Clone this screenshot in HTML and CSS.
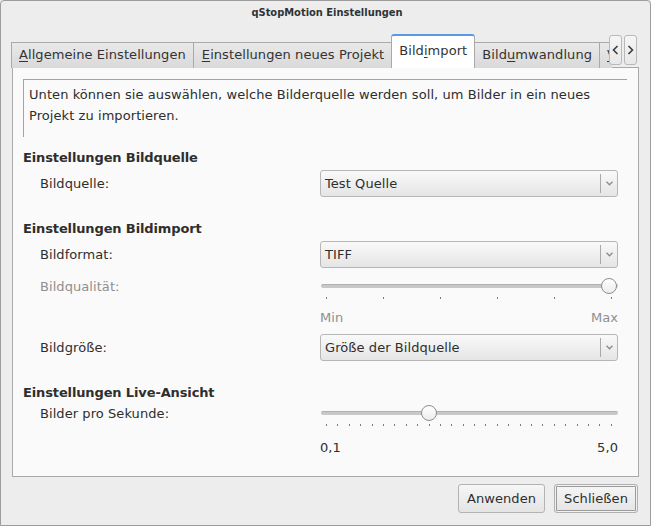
FILE: index.html
```html
<!DOCTYPE html>
<html lang="de">
<head>
<meta charset="utf-8">
<title>qStopMotion Einstellungen</title>
<link rel="stylesheet" href="styles.css">
</head>
<body>
<div class="window">
  <div class="titlebar">qStopMotion Einstellungen</div>
  <div class="tabbar">
    <div class="tabs">
      <div class="tab"><u>A</u>llgemeine Einstellungen</div>
      <div class="tab tab-wide"><u>E</u>instellungen neues Projekt</div>
      <div class="tab active">Bild<u>i</u>mport</div>
      <div class="tab">Bild<u>u</u>mwandlung</div>
      <div class="tab"><u>V</u>ideoexport</div>
    </div>
    <div class="scrollbtns">
      <div class="sbtn"><svg width="7" height="10" viewBox="0 0 7 10"><path d="M5.5 1 L1.5 5 L5.5 9" fill="none" stroke="#3c3c3c" stroke-width="1.6"/></svg></div>
      <div class="sbtn"><svg width="7" height="10" viewBox="0 0 7 10"><path d="M1.5 1 L5.5 5 L1.5 9" fill="none" stroke="#3c3c3c" stroke-width="1.6"/></svg></div>
    </div>
  </div>
  <div class="panel">
    <div class="desc">Unten können sie auswählen, welche Bilderquelle werden soll, um Bilder in ein neues Projekt zu importieren.</div>

    <div class="heading h-first">Einstellungen Bildquelle</div>
    <div class="row combo-row">
      <div class="label">Bildquelle:</div>
      <div class="combo"><span class="ctext">Test Quelle</span><span class="carrow"><svg width="7" height="5" viewBox="0 0 7 5"><path d="M0.5 0.8 L3.5 3.8 L6.5 0.8" fill="none" stroke="#8a8a8a" stroke-width="1.3"/></svg></span></div>
    </div>

    <div class="heading h-next">Einstellungen Bildimport</div>
    <div class="row combo-row">
      <div class="label">Bildformat:</div>
      <div class="combo"><span class="ctext">TIFF</span><span class="carrow"><svg width="7" height="5" viewBox="0 0 7 5"><path d="M0.5 0.8 L3.5 3.8 L6.5 0.8" fill="none" stroke="#8a8a8a" stroke-width="1.3"/></svg></span></div>
    </div>
    <div class="row slider-row s-quality">
      <div class="label disabled">Bildqualität:</div>
      <div class="slider">
        <div class="groove"></div>
        <div class="handle" style="left: 281px"></div>
      </div>
    </div>
    <div class="row ticks-row">
      <div class="label"></div>
      <div class="ticks">
        <i></i><i></i><i></i><i></i><i></i><i></i>
      </div>
    </div>
    <div class="row ends-row e-quality">
      <div class="label"></div>
      <div class="ends disabled"><span>Min</span><span>Max</span></div>
    </div>
    <div class="row combo-row c-size">
      <div class="label">Bildgröße:</div>
      <div class="combo"><span class="ctext">Größe der Bildquelle</span><span class="carrow"><svg width="7" height="5" viewBox="0 0 7 5"><path d="M0.5 0.8 L3.5 3.8 L6.5 0.8" fill="none" stroke="#8a8a8a" stroke-width="1.3"/></svg></span></div>
    </div>

    <div class="heading h-live">Einstellungen Live-Ansicht</div>
    <div class="row slider-row s-live">
      <div class="label">Bilder pro Sekunde:</div>
      <div class="slider">
        <div class="groove"></div>
        <div class="handle" style="left: 101px"></div>
      </div>
    </div>
    <div class="row ticks-row">
      <div class="label"></div>
      <div class="ticks">
        <i></i><i></i><i></i><i></i><i></i><i></i><i></i><i></i><i></i><i></i><i></i><i></i><i></i>
        <i></i><i></i><i></i><i></i><i></i><i></i><i></i><i></i><i></i><i></i><i></i><i></i><i></i>
      </div>
    </div>
    <div class="row ends-row e-live">
      <div class="label"></div>
      <div class="ends"><span>0,1</span><span>5,0</span></div>
    </div>
  </div>
  <div class="buttons">
    <div class="btn">Anwenden</div>
    <div class="btn default">Schließen</div>
  </div>
</div>
</body>
</html>
```
FILE: styles.css
```css
* { box-sizing: border-box; }
html, body { margin: 0; padding: 0; background: #ededed; }
body {
  font-family: "DejaVu Sans", "Liberation Sans", sans-serif;
  font-size: 13px;
  color: #2e2e2e;
  letter-spacing: 0.07px;
}
.window {
  width: 651px;
  height: 526px;
  border: 1px solid #9c9c9c;
  border-radius: 4px 4px 0 0;
  background: #ededed;
  display: flex;
  flex-direction: column;
  overflow: hidden;
}
.titlebar {
  height: 33px;
  line-height: 23px;
  text-align: center;
  font-family: "DejaVu Sans Condensed", "DejaVu Sans", sans-serif;
  font-stretch: condensed;
  font-weight: bold;
  font-size: 11px;
  letter-spacing: 0;
  color: #2e3436;
  padding-left: 3px;
}
.tabbar {
  position: relative;
  height: 33px;
  margin: 0 11px 0 10px;
}
.tabs {
  display: flex;
  align-items: flex-end;
  width: 601px;
  height: 34px;
  overflow: hidden;
  white-space: nowrap;
}
.tab {
  height: 26px;
  line-height: 23px;
  padding: 0 7px;
  border: 1px solid #a9a9a9;
  border-bottom: none;
  border-right: none;
  background: linear-gradient(#e9e9e9, #d9d9d9);
  color: #333;
  flex: none;
}
.tab-wide { padding: 0 7px 0 8px; }
.tab u { text-decoration-thickness: 1px; text-underline-offset: 2px; }
.tab.active {
  height: 34px;
  line-height: 30px;
  background: #ffffff;
  border-top: 2px solid #5a9be0;
  border-radius: 3px 3px 0 0;
  border-right: 1px solid #a9a9a9;
  padding: 0 7px 0 7px;
  position: relative;
  z-index: 1;
}
.tab.active + .tab { border-left: none; }
.scrollbtns {
  position: absolute;
  left: 598px;
  top: 1px;
  display: flex;
  gap: 2px;
  z-index: 2;
}
.sbtn {
  width: 13px;
  height: 30px;
  border: 1px solid #b9b9b9;
  border-radius: 3px;
  background: linear-gradient(#f6f6f6, #e8e8e8);
  display: flex;
  align-items: center;
  justify-content: center;
}
.panel {
  margin: 0 11px 0 11px;
  height: 410px;
  border: 1px solid #a9a9a9;
  background: #fafafa;
  padding: 11px 10px 0 10px;
}
.desc {
  width: 604px;
  height: 58px;
  border-top: 1px solid #a3a3a3;
  border-left: 1px solid #a3a3a3;
  padding: 4px 0 0 5px;
  line-height: 21px;
  color: #2e2e2e;
}
.heading {
  font-weight: bold;
  height: 21px;
  line-height: 21px;
  color: #2e2e2e;
  letter-spacing: -0.13px;
}
.h-first { margin-top: 10px; }
.h-next { margin-top: 21px; }
.h-live { margin-top: 21px; }
.row {
  display: flex;
  align-items: center;
}
.label {
  width: 297px;
  padding-left: 17px;
  flex: none;
}
.label.disabled, .disabled { color: #8f8f8f; }
.combo-row { height: 27px; margin-top: 2px; }
.combo {
  width: 298px;
  height: 27px;
  border: 1px solid #b6b6b6;
  border-radius: 3px;
  background: linear-gradient(#f9f9f9, #e5e5e5);
  display: flex;
  align-items: center;
}
.ctext {
  flex: 1;
  padding-left: 4px;
  color: #2e2e2e;
}
.carrow {
  width: 17px;
  height: 19px;
  border-left: 1px solid #a9a9a9;
  display: flex;
  align-items: center;
  justify-content: center;
}
.slider-row { height: 16px; }
.s-quality { margin-top: 10px; }
.s-live { margin-top: 2px; }
.slider {
  position: relative;
  width: 298px;
  height: 16px;
}
.groove {
  position: absolute;
  left: 1px;
  right: 0;
  top: 6px;
  height: 4px;
  border-radius: 2px;
  background: #c8c8c8;
  border-top: 1px solid #b0b0b0;
}
.handle {
  position: absolute;
  top: 0;
  width: 16px;
  height: 16px;
  border-radius: 50%;
  border: 1px solid #8e8e8e;
  background: linear-gradient(#ffffff, #ececec);
}
.ticks-row { height: 3px; margin-top: 2px; }
.ticks {
  margin-left: 6px;
  width: 286px;
  display: flex;
  justify-content: space-between;
}
.ticks i {
  display: block;
  width: 1px;
  height: 2px;
  background: #7a7a7a;
}
.ends-row { height: 16px; }
.e-quality { margin-top: 10px; }
.e-live { margin-top: 13px; }
.ends {
  width: 298px;
  display: flex;
  justify-content: space-between;
}
.c-size { margin-top: 9px; }
.buttons {
  display: flex;
  justify-content: flex-end;
  gap: 9px;
  margin: 7px 12px 0 0;
}
.btn {
  height: 29px;
  line-height: 27px;
  padding: 0 8px;
  border: 1px solid #b3b3b3;
  border-radius: 3px;
  background: linear-gradient(#f6f6f6, #e4e4e4);
  color: #2e2e2e;
}
.btn.default {
  border-color: #b0b0b0;
  box-shadow: inset 0 0 0 1px #f2f2f2, inset 0 0 0 2px #9a9a9a;
  padding: 0 9px;
}
```
